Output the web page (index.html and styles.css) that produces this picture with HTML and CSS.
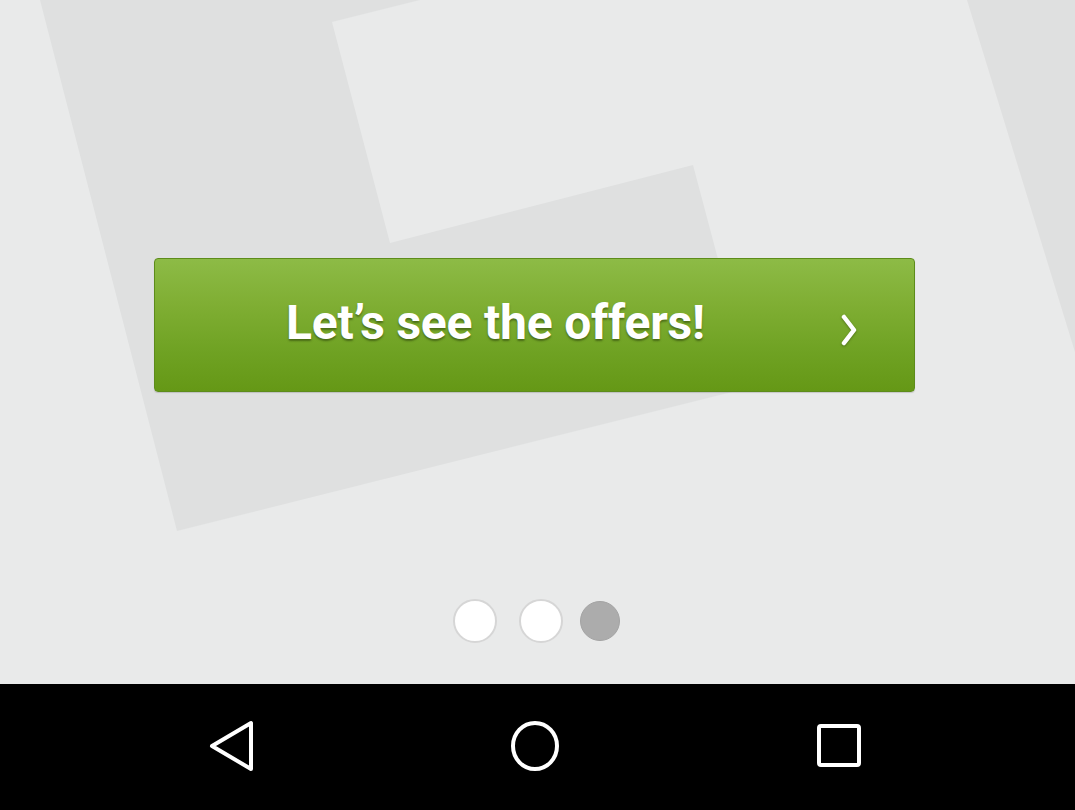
FILE: index.html
```html
<!DOCTYPE html>
<html lang="en">
<head>
<meta charset="utf-8">
<title>Offers</title>
<link rel="stylesheet" href="styles.css">
</head>
<body>
<div class="screen">
  <main class="content">
    <svg class="bg-logo" width="1075" height="684" viewBox="0 0 1075 684" aria-hidden="true">
      <polygon points="40,0 420,0 332,22 390,243 693,165 752,387 177,531" fill="#dfe0e0"/>
      <polygon points="967,0 1075,0 1075,352" fill="#dfe0e0"/>
    </svg>
    <button class="cta">
      <span class="cta-label">Let’s see the offers!</span>
      <svg class="cta-chevron" width="20" height="34" viewBox="0 0 20 34" aria-hidden="true">
        <polyline points="5,4 15,17 5,30" fill="none" stroke="#fff" stroke-width="4.5" stroke-linecap="round" stroke-linejoin="round"/>
      </svg>
    </button>
    <div class="dots">
      <span class="dot dot-a"></span>
      <span class="dot dot-b"></span>
      <span class="dot dot-active"></span>
    </div>
  </main>
  <nav class="navbar">
    <div class="nav-item">
      <svg width="50" height="54" viewBox="0 0 50 54" aria-hidden="true">
        <polygon points="6,27 45,4 45,50" fill="none" stroke="#fff" stroke-width="4" stroke-linejoin="round"/>
      </svg>
    </div>
    <div class="nav-item">
      <svg width="54" height="54" viewBox="0 0 54 54" aria-hidden="true">
        <ellipse cx="27" cy="27" rx="22" ry="23" fill="none" stroke="#fff" stroke-width="4"/>
      </svg>
    </div>
    <div class="nav-item">
      <svg width="50" height="50" viewBox="0 0 50 50" aria-hidden="true">
        <rect x="5" y="5" width="40" height="39" rx="2" fill="none" stroke="#fff" stroke-width="4"/>
      </svg>
    </div>
  </nav>
</div>
</body>
</html>
```

FILE: styles.css
```css
* { box-sizing: border-box; }

html, body {
  margin: 0;
  padding: 0;
  background: #000;
}

.screen {
  width: 1075px;
  height: 810px;
  display: flex;
  flex-direction: column;
  font-family: Roboto, "Liberation Sans", Arial, sans-serif;
}

.content {
  position: relative;
  height: 684px;
  background: #e9eaea;
  overflow: hidden;
  display: flex;
  flex-direction: column;
  align-items: flex-start;
  padding-top: 258px;
}

.bg-logo {
  position: absolute;
  left: 0;
  top: 0;
}

.cta {
  position: relative;
  margin-left: 154px;
  width: 761px;
  height: 134px;
  border: 1px solid #5d8c1b;
  border-radius: 4px;
  background: linear-gradient(#8dbb46 0%, #7fae33 35%, #6fa223 70%, #659816 100%);
  box-shadow: 0 1px 1px rgba(0, 0, 0, 0.15);
  display: flex;
  align-items: center;
  padding: 0 0 0 131px;
  cursor: pointer;
}

.cta-label {
  color: #fff;
  font-family: Roboto, "Liberation Sans", Arial, sans-serif;
  font-weight: 700;
  font-size: 48px;
  letter-spacing: -0.2px;
  text-shadow: 0 2px 2px rgba(40, 60, 10, 0.55);
  margin-top: -6px;
}

.cta-chevron {
  margin-left: auto;
  margin-right: 55px;
  margin-top: 9px;
  filter: drop-shadow(0 1px 1px rgba(40, 60, 10, 0.5));
}

.dots {
  align-self: center;
  display: flex;
  align-items: center;
  margin-top: 207px;
  margin-right: 3px;
}

.dot {
  border-radius: 50%;
}

.dot-a, .dot-b {
  width: 44px;
  height: 44px;
  background: #fff;
  border: 2px solid #d6d6d6;
}

.dot-a { margin-right: 22px; }
.dot-b { margin-right: 17px; }

.dot-active {
  width: 40px;
  height: 40px;
  background: #acacac;
  border: 1px solid #a4a4a4;
}

.navbar {
  height: 126px;
  background: #000;
  display: grid;
  grid-template-columns: repeat(3, 304px);
  justify-content: center;
  align-items: center;
  padding-right: 6px;
}

.nav-item {
  display: flex;
  justify-content: center;
  align-items: center;
  margin-top: -2px;
}
```
